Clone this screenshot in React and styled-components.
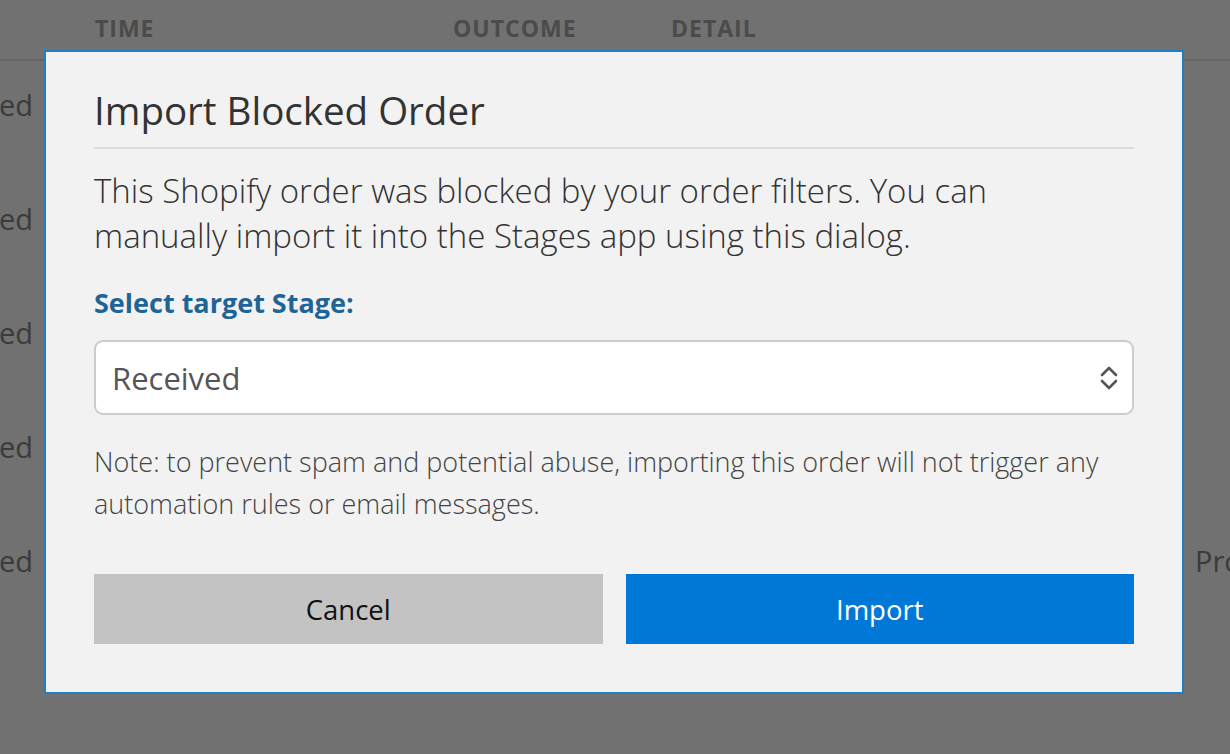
import styled, { createGlobalStyle } from "styled-components";

const GlobalStyle = createGlobalStyle`
  html, body {
    margin: 0;
    padding: 0;
    background: #ffffff;
    font-family: "Open Sans", "Noto Sans", sans-serif;
    overflow: hidden;
  }
`;

const Page = styled.div`
  width: 1230px;
  height: 754px;
  overflow: hidden;
`;

const HeaderRow = styled.div`
  display: grid;
  grid-template-columns: 95px 358px 218px 524px 1fr;
  height: 61px;
  border-bottom: 2px solid #e4e4e4;
  align-items: start;
  padding-top: 12px;
  box-sizing: border-box;
`;

const HeadCell = styled.div`
  font-size: 23px;
  font-weight: 700;
  letter-spacing: 1px;
  color: #a9a9a9;
  line-height: 32px;
`;

const Row = styled.div`
  display: grid;
  grid-template-columns: 95px 1100px 1fr;
  height: 114px;
  padding-top: 26px;
  box-sizing: border-box;
`;

const StatusCell = styled.div`
  display: flex;
  justify-content: flex-end;
  padding-right: 62px;
  white-space: nowrap;
  font-size: 29px;
  line-height: 36px;
  color: #858585;
`;

const Cell = styled.div`
  white-space: nowrap;
  font-size: 29px;
  line-height: 36px;
  color: #858585;
`;

const Backdrop = styled.div`
  position: fixed;
  inset: 0;
  background: rgba(0, 0, 0, 0.557);
  display: flex;
  justify-content: center;
  align-items: flex-start;
  padding-top: 50px;
  padding-right: 2px;
`;

const Dialog = styled.div`
  width: 1140px;
  box-sizing: border-box;
  background: #f2f2f2;
  border: 2px solid #1d7fc4;
  padding: 35px 48px 48px;
  display: flex;
  flex-direction: column;
`;

const Title = styled.h2`
  margin: 0;
  font-size: 38.5px;
  line-height: 46px;
  font-weight: 400;
  color: #333333;
  padding-bottom: 14px;
  border-bottom: 2px solid #dcdcdc;
`;

const Intro = styled.p`
  margin: 19px 0 0;
  max-width: 1000px;
  font-size: 33px;
  line-height: 45px;
  font-weight: 300;
  color: #333333;
`;

const Label = styled.label`
  margin-top: 29px;
  font-size: 27px;
  line-height: 32px;
  font-weight: 700;
  color: #1f6496;
`;

const SelectBox = styled.div`
  margin-top: 21px;
  height: 75px;
  box-sizing: border-box;
  border: 2px solid #cccccc;
  border-radius: 9px;
  background: #ffffff;
  display: flex;
  align-items: center;
  padding: 0 12px 0 16px;
`;

const Select = styled.select`
  flex: 1;
  appearance: none;
  border: none;
  outline: none;
  background: transparent;
  font-family: inherit;
  font-size: 31px;
  color: #555555;
  padding: 0;
`;

const Note = styled.p`
  margin: 26px 0 0;
  font-size: 27px;
  line-height: 42px;
  font-weight: 300;
  color: #444444;
`;

const Actions = styled.div`
  margin-top: 49px;
  display: grid;
  grid-template-columns: 1fr 1fr;
  gap: 23px;
`;

const Button = styled.button`
  height: 70px;
  border: none;
  font-family: inherit;
  font-size: 27.5px;
  cursor: pointer;
  background: ${(p) => (p.$primary ? "#0078d7" : "#c3c3c3")};
  color: ${(p) => (p.$primary ? "#ffffff" : "#111111")};
`;

const rows = [
  { status: "Blocked" },
  { status: "Blocked" },
  { status: "Blocked" },
  { status: "Blocked" },
  { status: "Blocked", extra: "Processing" },
];

const UpDown = () => (
  <svg width="22" height="30" viewBox="0 0 22 30" fill="none">
    <path
      d="M4 12 L11 5 L18 12"
      stroke="#555"
      strokeWidth="2.6"
      strokeLinecap="round"
      strokeLinejoin="round"
    />
    <path
      d="M4 18 L11 25 L18 18"
      stroke="#555"
      strokeWidth="2.6"
      strokeLinecap="round"
      strokeLinejoin="round"
    />
  </svg>
);

const App = () => {
  return (
    <>
      <GlobalStyle />
      <Page>
        <HeaderRow>
          <HeadCell />
          <HeadCell>TIME</HeadCell>
          <HeadCell>OUTCOME</HeadCell>
          <HeadCell>DETAIL</HeadCell>
          <HeadCell />
        </HeaderRow>
        {rows.map((row, i) => (
          <Row key={i}>
            <StatusCell>{row.status}</StatusCell>
            <Cell />
            <Cell>{row.extra}</Cell>
          </Row>
        ))}
      </Page>
      <Backdrop>
        <Dialog>
          <Title>Import Blocked Order</Title>
          <Intro>
            This Shopify order was blocked by your order filters. You can
            manually import it into the Stages app using this dialog.
          </Intro>
          <Label htmlFor="stage">Select target Stage:</Label>
          <SelectBox>
            <Select id="stage" defaultValue="received">
              <option value="received">Received</option>
              <option value="processing">Processing</option>
              <option value="shipped">Shipped</option>
            </Select>
            <UpDown />
          </SelectBox>
          <Note>
            Note: to prevent spam and potential abuse, importing this order will
            not trigger any automation rules or email messages.
          </Note>
          <Actions>
            <Button>Cancel</Button>
            <Button $primary>Import</Button>
          </Actions>
        </Dialog>
      </Backdrop>
    </>
  );
};

export default App;
